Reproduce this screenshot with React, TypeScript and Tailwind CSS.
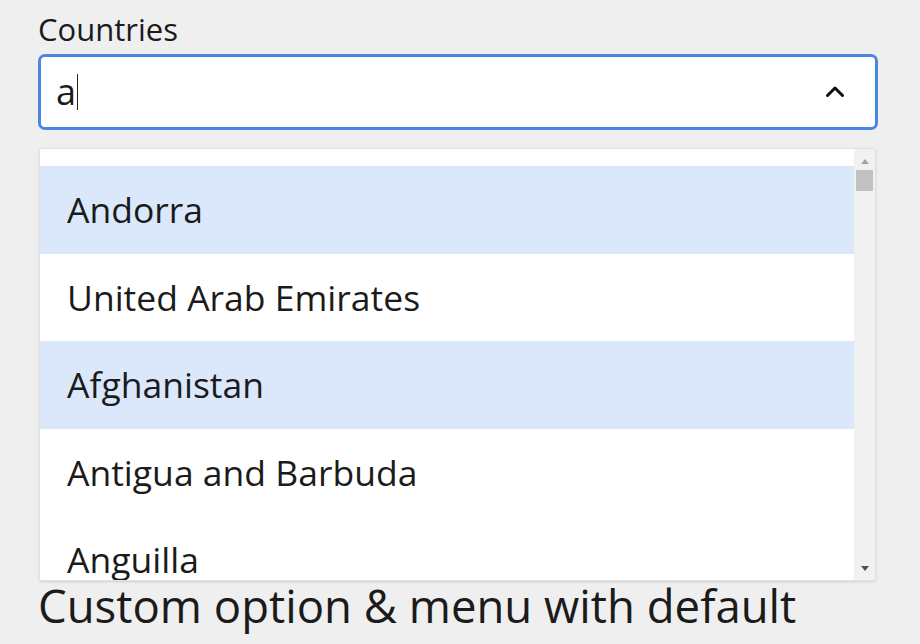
import { useState } from "react";

const COUNTRIES = [
    "Andorra",
    "United Arab Emirates",
    "Afghanistan",
    "Antigua and Barbuda",
    "Anguilla",
    "Albania",
];

const FONT = { fontFamily: '"Open Sans", "Noto Sans", sans-serif' };

function ChevronUp() {
    return (
        <svg width="24" height="24" viewBox="0 0 24 24" fill="none">
            <path
                d="M4.5 15.5 L12 8 L19.5 15.5"
                stroke="#111"
                strokeWidth="3"
                strokeLinecap="round"
                strokeLinejoin="round"
            />
        </svg>
    );
}

function Scrollbar() {
    return (
        <div className="flex w-[21px] shrink-0 flex-col items-center bg-[#f1f1f1]">
            <div className="mt-[10px] h-0 w-0 border-x-[4px] border-b-[5px] border-x-transparent border-b-[#a3a3a3]" />
            <div className="mt-[6px] h-[21px] w-[17px] bg-[#c1c1c1]" />
            <div className="flex-1" />
            <div className="mb-[9px] h-0 w-0 border-x-[4px] border-t-[5px] border-x-transparent border-t-[#505050]" />
        </div>
    );
}

export default function App() {
    const [query] = useState("a");
    const highlighted = [0, 2];

    return (
        <div
            className="min-h-screen bg-[#efefef] pl-[38px] pr-[42px] pt-[10px] text-[#1b1b1b]"
            style={FONT}
        >
            <label className="block text-[31px] leading-[38px]">Countries</label>
            <div className="relative mt-[6px]">
                <div className="flex h-[76px] items-center rounded-[7px] border-[3px] border-[#4a87e4] bg-white pl-[15px] pr-[28px]">
                    <span className="text-[36px] leading-none">{query}</span>
                    <span className="ml-[1px] h-[36px] w-[1px] bg-[#222]" />
                    <div className="flex-1" />
                    <ChevronUp />
                </div>

                <p className="mt-[14px] text-[18px] leading-[24px] text-[#333]">
                    Left aligned menu
                </p>

                <div className="absolute left-[1px] right-[2px] top-[94px] z-10 flex h-[433px] overflow-hidden rounded-[3px] border border-[#e2e2e2] bg-white shadow-sm">
                    <div className="flex-1 overflow-hidden pt-[17px]">
                        {COUNTRIES.map((c, i) => (
                            <div
                                key={c}
                                className={`flex h-[87.5px] items-center pl-[27px] text-[35.5px] ${
                                    highlighted.includes(i) ? "bg-[#dbe8fb]" : "bg-white"
                                }`}
                            >
                                {c}
                            </div>
                        ))}
                    </div>
                    <Scrollbar />
                </div>
            </div>

            <h2 className="mt-[411px] text-[45.5px] leading-[52px]">
                Custom option &amp; menu with default
            </h2>
        </div>
    );
}
